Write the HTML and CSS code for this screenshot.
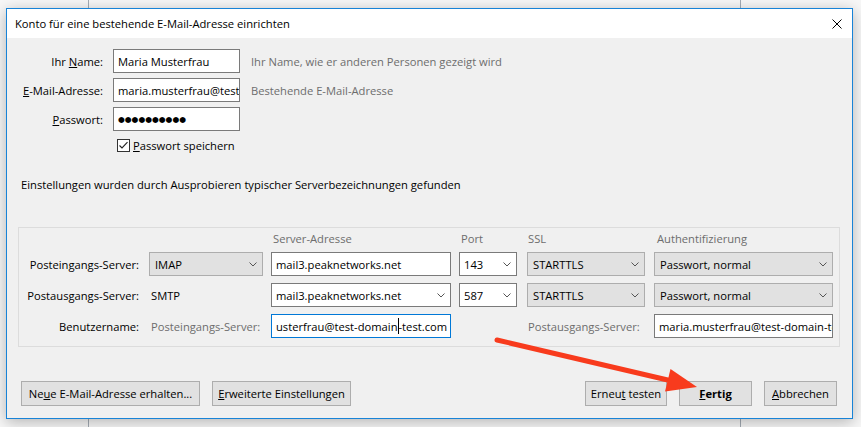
FILE: index.html
```html
<!DOCTYPE html>
<html lang="de">
<head>
<meta charset="utf-8">
<title>Konto einrichten</title>
<link rel="stylesheet" href="styles.css">
</head>
<body>
<div class="dialog">
  <div class="titlebar">
    <span class="title">Konto für eine bestehende E-Mail-Adresse einrichten</span>
    <svg class="close" width="10" height="10" viewBox="0 0 10 10"><path d="M0.5 0.5L9.5 9.5M9.5 0.5L0.5 9.5" stroke="#000" stroke-width="1" fill="none"/></svg>
  </div>
  <div class="content">
    <div class="account">
      <span class="lbl">Ihr <u>N</u>ame:</span>
      <div class="textbox">Maria Musterfrau</div>
      <span class="hint">Ihr Name, wie er anderen Personen gezeigt wird</span>

      <span class="lbl"><u>E</u>-Mail-Adresse:</span>
      <div class="textbox">maria.musterfrau@test-domain-test.com</div>
      <span class="hint">Bestehende E-Mail-Adresse</span>

      <span class="lbl"><u>P</u>asswort:</span>
      <div class="textbox"><span class="dots">●●●●●●●●●●</span></div>
      <span></span>
    </div>

    <div class="remember">
      <svg class="check" width="13" height="13" viewBox="0 0 13 13"><rect x="0.5" y="0.5" width="12" height="12" fill="#fff" stroke="#333"/><path d="M2.5 6.5L5 9L10.5 3.2" stroke="#222" stroke-width="1.1" fill="none"/></svg>
      <span><u>P</u>asswort speichern</span>
    </div>

    <p class="status">Einstellungen wurden durch Ausprobieren typischer Serverbezeichnungen gefunden</p>

    <div class="servers">
      <span></span>
      <span></span>
      <span class="head">Server-Adresse</span>
      <span class="head">Port</span>
      <span class="head ssl">SSL</span>
      <span class="head auth">Authentifizierung</span>

      <span class="rlbl">Posteingangs-Server:</span>
      <div class="combo">IMAP<svg class="chev" width="8" height="5" viewBox="0 0 8 5"><path d="M0.5 0.5L4 4L7.5 0.5" stroke="#555" fill="none"/></svg></div>
      <div class="textbox">mail3.peaknetworks.net</div>
      <div class="combo white">143<svg class="chev" width="8" height="5" viewBox="0 0 8 5"><path d="M0.5 0.5L4 4L7.5 0.5" stroke="#555" fill="none"/></svg></div>
      <div class="combo ssl">STARTTLS<svg class="chev" width="8" height="5" viewBox="0 0 8 5"><path d="M0.5 0.5L4 4L7.5 0.5" stroke="#555" fill="none"/></svg></div>
      <div class="combo auth">Passwort, normal<svg class="chev" width="8" height="5" viewBox="0 0 8 5"><path d="M0.5 0.5L4 4L7.5 0.5" stroke="#555" fill="none"/></svg></div>

      <span class="rlbl">Postausgangs-Server:</span>
      <span class="plain">SMTP</span>
      <div class="combo white">mail3.peaknetworks.net<svg class="chev" width="8" height="5" viewBox="0 0 8 5"><path d="M0.5 0.5L4 4L7.5 0.5" stroke="#555" fill="none"/></svg></div>
      <div class="combo white">587<svg class="chev" width="8" height="5" viewBox="0 0 8 5"><path d="M0.5 0.5L4 4L7.5 0.5" stroke="#555" fill="none"/></svg></div>
      <div class="combo ssl">STARTTLS<svg class="chev" width="8" height="5" viewBox="0 0 8 5"><path d="M0.5 0.5L4 4L7.5 0.5" stroke="#555" fill="none"/></svg></div>
      <div class="combo auth">Passwort, normal<svg class="chev" width="8" height="5" viewBox="0 0 8 5"><path d="M0.5 0.5L4 4L7.5 0.5" stroke="#555" fill="none"/></svg></div>

      <span class="rlbl">Benutzername:</span>
      <span class="plain grey">Posteingangs-Server:</span>
      <div class="textbox focus"><span class="seg">usterfrau@test-domain</span><span class="caret"></span><span class="seg">-test.com</span></div>
      <span></span>
      <span class="plain grey out">Postausgangs-Server:</span>
      <div class="textbox auth">maria.musterfrau@test-domain-test.com</div>
    </div>

    <div class="buttons">
      <div class="group">
        <button class="btn w1">Ne<u>u</u>e E-Mail-Adresse erhalten...</button>
        <button class="btn w2"><u>E</u>rweiterte Einstellungen</button>
      </div>
      <div class="group">
        <button class="btn w3">Erneu<u>t</u> testen</button>
        <button class="btn w4 default"><u>F</u>ertig</button>
        <button class="btn w4"><u>A</u>bbrechen</button>
      </div>
    </div>
  </div>
</div>
<svg class="arrow" width="861" height="427" viewBox="0 0 861 427">
  <line x1="497" y1="340" x2="672" y2="381" stroke="#f83b1d" stroke-width="5" stroke-linecap="round"/>
  <polygon points="697,387 670.5,369 665,391.5" fill="#f83b1d"/>
</svg>
</body>
</html>
```
FILE: styles.css
```css
* { box-sizing: border-box; }
html, body { margin: 0; }
body {
  width: 861px;
  height: 427px;
  overflow: hidden;
  position: relative;
  padding: 8px 0 0 6px;
  font-family: "Open Sans", "Noto Sans", sans-serif;
  font-size: 11.2px;
  color: #000;
  background:
    linear-gradient(#a3abb4, #a3abb4) 88px 0 / 1px 100% no-repeat,
    linear-gradient(#a3abb4, #a3abb4) 740px 0 / 1px 100% no-repeat,
    #f7f7f7;
}
.dialog {
  width: 847px;
  height: 411px;
  border: 1px solid #1883d7;
  background: #f0f0f0;
  box-shadow: 0 3px 14px rgba(0, 0, 0, 0.28);
  display: flex;
  flex-direction: column;
}
.titlebar {
  height: 29px;
  flex: none;
  background: #fff;
  display: flex;
  align-items: center;
  justify-content: space-between;
  padding: 0 10px 0 8px;
}
.content {
  padding-top: 11px;
  display: flex;
  flex-direction: column;
}
.account {
  display: grid;
  grid-template-columns: 96px 127px 1fr;
  grid-auto-rows: 24px;
  column-gap: 10px;
  row-gap: 5px;
  align-items: center;
}
.lbl { text-align: right; }
.hint { color: #6d6d6d; margin-left: 1px; }
.textbox {
  height: 24px;
  border: 1px solid #7a7a7a;
  background: #fff;
  padding: 0 4px;
  display: flex;
  align-items: center;
  white-space: nowrap;
  overflow: hidden;
}
.textbox.focus { border-color: #0078d7; }
.seg { flex: none; }
.dots {
  font-family: "DejaVu Sans", sans-serif;
  font-size: 7.8px;
  letter-spacing: 0;
}
.remember {
  margin: 8px 0 0 110px;
  height: 13px;
  display: flex;
  align-items: center;
  gap: 3px;
}
.check { flex: none; }
.status {
  margin: 25px 0 0 14px;
  line-height: 16px;
}
.servers {
  margin: 34px 12px 0 11px;
  border: 1px solid #dcdcdc;
  padding: 0 6px 8px 0;
  display: grid;
  grid-template-columns: 122px 114px 180px 58px 120px 180px;
  grid-template-rows: 17px repeat(3, 24px);
  column-gap: 8px;
  row-gap: 7px;
  align-items: center;
}
.head {
  color: #6d6d6d;
  align-self: end;
  line-height: 16px;
  margin-bottom: -2px;
  padding-left: 2px;
}
.head.ssl { padding-left: 3px; }
.head.auth { padding-left: 4px; }
.rlbl { text-align: right; padding-right: 2px; white-space: nowrap; }
.plain { padding-left: 2px; white-space: nowrap; }
.plain.grey { color: #6d6d6d; }
.plain.out { padding-left: 3px; }
.combo {
  height: 24px;
  border: 1px solid #adadad;
  background: #e1e1e1;
  display: flex;
  align-items: center;
  justify-content: space-between;
  padding: 0 5px 0 5px;
  white-space: nowrap;
}
.combo.white { background: #fff; border-color: #7a7a7a; padding-left: 4px; }
.combo.ssl { margin-left: 2px; }
.combo.auth, .textbox.auth { margin-left: 1px; }
.chev { flex: none; }
.caret {
  flex: none;
  width: 1px;
  height: 16px;
  background: #000;
}
.buttons {
  margin-top: 34px;
  padding: 0 15px 0 14px;
  display: flex;
  justify-content: space-between;
}
.group { display: flex; gap: 12px; }
.btn {
  height: 25px;
  border: 1px solid #adadad;
  background: #e1e1e1;
  font: inherit;
  color: #000;
  padding: 0;
  margin: 0;
}
.btn.w1 { width: 179px; }
.btn.w2 { width: 139px; }
.btn.w3 { width: 82px; }
.btn.w4 { width: 73px; }
.btn.default { font-weight: bold; }
.arrow {
  position: absolute;
  left: 0;
  top: 0;
  pointer-events: none;
}
```
